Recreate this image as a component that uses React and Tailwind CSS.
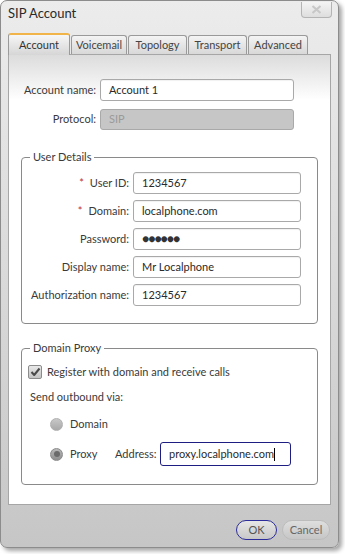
import React from "react";

const font = { fontFamily: "Lato, 'Open Sans', sans-serif" };

function Field({ label, value, req, w = "w-[111px]", inputW = "w-[168px]", type }) {
  return (
    <div className="flex items-center h-[22px]">
      <div className={`${w} text-right pr-[4px] text-[11px] text-[#3a3a3a] whitespace-nowrap`}>
        {req && <span className="text-[#c03030] mr-[6px]">*</span>}
        {label}
      </div>
      <div className={`${inputW} h-[22px] border border-[#a9a9a9] rounded-[3px] bg-white flex items-center pl-[8px] text-[11px] text-[#2a2a2a] shadow-[inset_0_1px_1px_rgba(0,0,0,0.06)]`}>
        {type === "pw" ? (
          <span className="text-[#333] text-[12px] tracking-[-1px] leading-none">●●●●●●</span>
        ) : (
          value
        )}
      </div>
    </div>
  );
}

function Tab({ label, active }) {
  if (active)
    return (
      <div className="h-[22px] w-[62px] rounded-t-[3px] border border-b-0 border-[#9a9a9a] border-t-[2px] border-t-[#f0b449] bg-gradient-to-b from-[#f6f6f6] to-[#d6d6d6] flex items-center justify-center text-[11px] text-[#333] -mb-px relative z-10">
        {label}
      </div>
    );
  return (
    <div className="h-[19px] rounded-t-[3px] border border-b-0 border-[#9a9a9a] bg-gradient-to-b from-[#f4f4f4] to-[#d8d8d8] flex items-center justify-center text-[11px] text-[#444] ml-px">
      {label}
    </div>
  );
}

export default function App() {
  return (
    <div className="w-[345px] h-[554px] bg-white" style={font}>
      <div className="w-[339px] h-[548px] rounded-[7px] border border-[#8c8c8c] bg-gradient-to-b from-[#ececec] via-[#dadada] to-[#c6c6c6] shadow-[3px_3px_4px_rgba(0,0,0,0.35)] flex flex-col overflow-hidden">
        {/* title bar */}
        <div className="h-[31px] flex items-start justify-between">
          <div className="pl-[7px] pt-[3px] text-[13px] text-[#2a2a2a]">SIP Account</div>
          <div className="mr-[6px] mt-[1px] w-[31px] h-[16px] rounded-b-[4px] border border-t-0 border-[#b4b4b4] bg-gradient-to-b from-[#f4f4f4] to-[#dedede] flex items-center justify-center">
            <svg width="11" height="9" viewBox="0 0 11 9">
              <path d="M1.5 1 L9.5 8 M9.5 1 L1.5 8" stroke="#c8c8c8" strokeWidth="2.2" />
            </svg>
          </div>
        </div>
        {/* tabs */}
        <div className="h-[22px] pl-[7px] flex items-end">
          <Tab label="Account" active />
          <div className="w-[57px]"><Tab label="Voicemail" /></div>
          <div className="w-[60px]"><Tab label="Topology" /></div>
          <div className="w-[60px]"><Tab label="Transport" /></div>
          <div className="w-[61px]"><Tab label="Advanced" /></div>
        </div>
        {/* panel */}
        <div className="ml-[7px] w-[323px] h-[451px] border border-[#a6a6a6] bg-gradient-to-b from-[#dcdcdc] via-white via-[10%] to-white flex flex-col pt-[24px]">
          <Field label="Account name:" value="Account 1" w="w-[91px]" inputW="w-[194px]" />
          <div className="flex items-center h-[21px] mt-[8px]">
            <div className="w-[91px] text-right pr-[4px] text-[11px] text-[#3a3a3a]">Protocol:</div>
            <div className="w-[194px] h-[21px] border border-[#a9a9a9] rounded-[3px] bg-[#c6c6c6] flex items-center pl-[8px] text-[11px] text-[#9a9a9a]">
              SIP
            </div>
          </div>

          <fieldset className="ml-[12px] w-[297px] mt-[20px] border border-[#8a8a8a] rounded-[4px] pb-[17px] pt-[8px] flex flex-col gap-[6px]">
            <legend className="ml-[8px] px-[3px] text-[11px] text-[#3a3a3a] leading-[14px]">User Details</legend>
            <Field label="User ID:" value="1234567" req />
            <Field label="Domain:" value="localphone.com" req />
            <Field label="Password:" type="pw" />
            <Field label="Display name:" value="Mr Localphone" />
            <Field label="Authorization name:" value="1234567" />
          </fieldset>

          <fieldset className="ml-[12px] w-[297px] mt-[17px] h-[144px] border border-[#8a8a8a] rounded-[4px] pt-[9px] pl-[6px] flex flex-col">
            <legend className="ml-[2px] px-[3px] text-[11px] text-[#3a3a3a] leading-[14px]">Domain Proxy</legend>
            <div className="flex items-center h-[14px] mt-[1px]">
              <div className="w-[14px] h-[14px] rounded-[2px] border border-[#8c8c8c] bg-gradient-to-b from-[#e8e8e8] to-[#c4c4c4] flex items-center justify-center">
                <svg width="11" height="10" viewBox="0 0 11 10">
                  <path d="M1.5 5 L4.2 8 L9.5 1.5" stroke="#4a4a4a" strokeWidth="2" fill="none" strokeLinejoin="round" />
                </svg>
              </div>
              <span className="ml-[5px] text-[11px] text-[#3a3a3a]">Register with domain and receive calls</span>
            </div>
            <div className="mt-[11px] ml-[2px] h-[14px] flex items-center text-[11px] text-[#3a3a3a]">Send outbound via:</div>
            <div className="mt-[13px] ml-[22px] flex items-center h-[14px]">
              <div className="w-[13px] h-[13px] rounded-full bg-gradient-to-b from-[#c8c8c8] to-[#a8a8a8] border border-[#b0b0b0]" />
              <span className="ml-[7px] text-[11px] text-[#3a3a3a]">Domain</span>
            </div>
            <div className="mt-[11px] ml-[22px] flex items-center h-[24px]">
              <div className="w-[13px] h-[13px] rounded-full bg-gradient-to-b from-[#b8b8b8] to-[#8e8e8e] border border-[#8a8a8a] flex items-center justify-center">
                <div className="w-[6px] h-[6px] rounded-full bg-[#6a6a6a]" />
              </div>
              <span className="ml-[7px] w-[27px] text-[11px] text-[#3a3a3a]">Proxy</span>
              <span className="ml-[18px] w-[41px] text-[11px] text-[#3a3a3a]">Address:</span>
              <div className="ml-[4px] w-[131px] h-[24px] border border-[#1e1e82] rounded-[3px] bg-white flex items-center pl-[8px] text-[11px] text-[#2a2a2a]">
                proxy.localphone.com<span className="inline-block w-px h-[13px] bg-black" />
              </div>
            </div>
          </fieldset>
        </div>
        {/* footer */}
        <div className="flex justify-end gap-[5px] pr-[8px] mt-[15px]">
          <div className="w-[41px] h-[20px] rounded-full border border-[#2c2c9a] bg-gradient-to-b from-[#e6e6e6] to-[#c8c8c8] flex items-center justify-center text-[11px] text-[#555]">OK</div>
          <div className="w-[48px] h-[20px] rounded-full border border-[#bcbcbc] bg-gradient-to-b from-[#dedede] to-[#c6c6c6] flex items-center justify-center text-[11px] text-[#666]">Cancel</div>
        </div>
      </div>
    </div>
  );
}
